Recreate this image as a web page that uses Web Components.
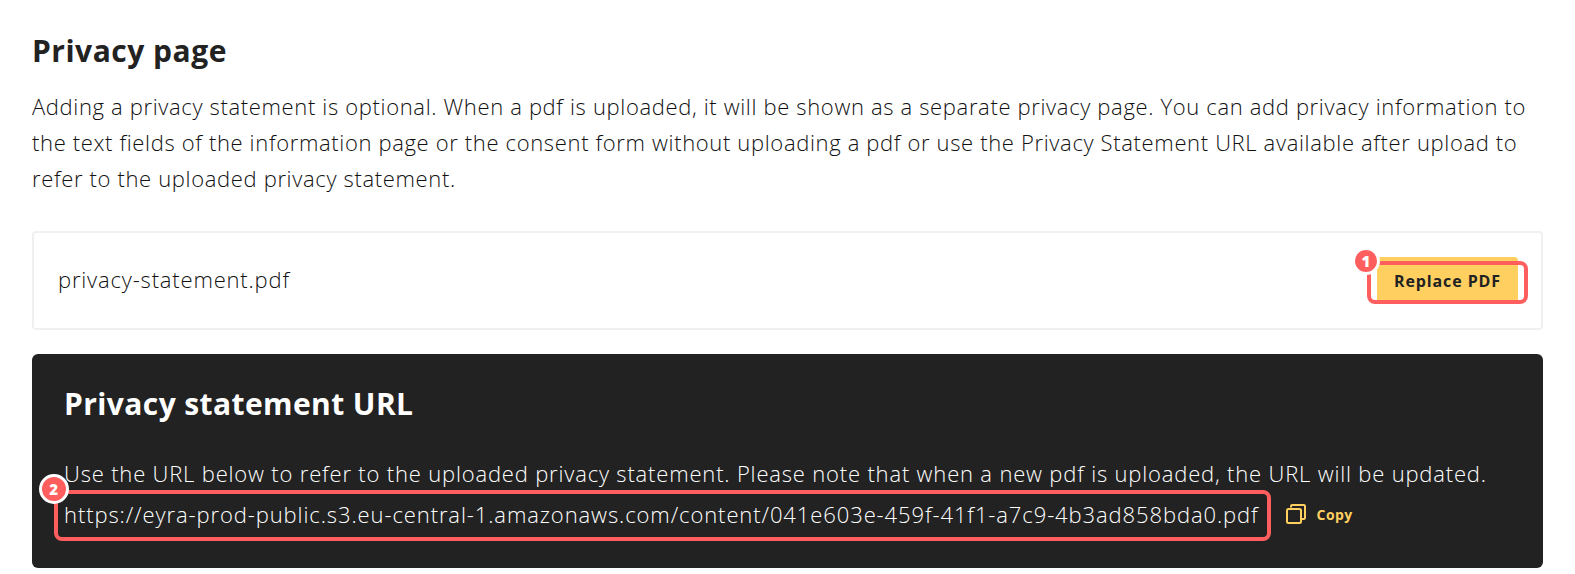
<!DOCTYPE html>
<html>
<head>
<meta charset="utf-8">
<style>
  html, body { margin: 0; background: #fff; }
  body { font-family: "Open Sans", Lato, sans-serif; font-weight: 300; color: #222; overflow: hidden; }
</style>
</head>
<body>
<privacy-page></privacy-page>

<script>
class MarkBadge extends HTMLElement {
    constructor(){
        super();
        this.shadowDOM = this.attachShadow({mode: 'open'});
        this.shadowDOM.innerHTML = `
        <style>
        :host {
            position: absolute;
            width: var(--badge-size, 28px);
            height: var(--badge-size, 28px);
            box-sizing: border-box;
            display: flex;
            align-items: center;
            justify-content: center;
            border: 3px solid #fff;
            border-radius: 50%;
            background: #ff5e5e;
            color: #fff;
            font: 800 15px "Open Sans", sans-serif;
        }
        </style>
        <slot></slot>`;
    }
}

class MarkBox extends HTMLElement {
    constructor(){
        super();
        this.shadowDOM = this.attachShadow({mode: 'open'});
        this.shadowDOM.innerHTML = `
        <style>
        :host {
            position: relative;
            display: inline-block;
        }
        .frame {
            position: absolute;
            inset: var(--frame-inset, -4px);
            border: 4px solid #ff5e5e;
            border-radius: 8px;
            pointer-events: none;
        }
        mark-badge { left: var(--badge-x, -19px); top: var(--badge-y, -16px); }
        </style>
        <slot></slot>
        <div class="frame"></div>
        <mark-badge>${this.getAttribute('n')}</mark-badge>`;
    }
}

class PdfRow extends HTMLElement {
    constructor(){
        super();
        this.shadowDOM = this.attachShadow({mode: 'open'});
        this.shadowDOM.innerHTML = `
        <style>
        :host {
            display: flex;
            align-items: center;
            justify-content: space-between;
            box-sizing: border-box;
            height: 99px;
            margin-top: 35px;
            padding: 0 23px 0 24px;
            border: 2px solid #f0f0f0;
            border-radius: 4px;
        }
        .name { margin-top: -4px; font-size: 22px; color: #111; letter-spacing: .82px; }
        mark-box {
            margin-top: -1px;
            --frame-inset: 4px -10px 0 -10px;
            --badge-x: -25px;
            --badge-y: -10px;
        }
        .btn {
            display: block;
            width: 141px;
            height: 47px;
            text-align: center;
            padding: 2px 0 0;
            border: 0;
            border-radius: 4px;
            background: #ffcf60;
            color: #222;
            font: 700 16px "Open Sans", sans-serif;
            letter-spacing: .9px;
        }
        </style>
        <span class="name"><slot name="file"></slot></span>
        <mark-box n="1"><button class="btn"><slot name="action"></slot></button></mark-box>`;
    }
}

class UrlPanel extends HTMLElement {
    constructor(){
        super();
        this.shadowDOM = this.attachShadow({mode: 'open'});
        this.shadowDOM.innerHTML = `
        <style>
        :host {
            display: block;
            box-sizing: border-box;
            height: 214px;
            margin-top: 24px;
            padding: 30px 32px 0;
            border-radius: 6px;
            background: #222;
            color: #fff;
        }
        h2 { margin: 0; font: 700 30px/40px "Open Sans", sans-serif; letter-spacing: .4px; }
        p { margin: 29px 0 0; font-size: 22px; line-height: 40px; white-space: nowrap; letter-spacing: .82px; }
        .row { display: flex; align-items: center; margin-top: 1px; font-size: 22px; line-height: 40px; letter-spacing: .9px; }
        mark-box {
            --frame-inset: -4px -12px -7px -10px;
            --badge-size: 30px;
            --badge-x: -25px;
            --badge-y: -20px;
            white-space: nowrap;
        }
        .copy {
            display: flex;
            align-items: center;
            gap: 11px;
            margin-left: 27px;
            color: #ffcf60;
            font: 700 14px "Open Sans", sans-serif;
            letter-spacing: .4px;
        }
        svg { width: 20px; height: 20px; fill: none; stroke: #ffcf60; stroke-width: 2; }
        </style>
        <h2><slot name="title"></slot></h2>
        <p><slot name="note"></slot></p>
        <div class="row">
            <mark-box n="2"><slot name="url"></slot></mark-box>
            <span class="copy">
                <svg viewBox="0 0 20 20">
                    <path d="M5 3.5V2.2C5 1.5 5.5 1 6.2 1h11.6C18.5 1 19 1.5 19 2.2v11.6c0 .7-.5 1.2-1.2 1.2H15"/>
                    <rect x="1" y="5" width="14" height="14" rx="1.5"/>
                </svg>
                <slot name="copy"></slot>
            </span>
        </div>`;
    }
}

class PrivacyPage extends HTMLElement {
    constructor(){
        super();
        this.shadowDOM = this.attachShadow({mode: 'open'});
        this.shadowDOM.innerHTML = `
        <style>
        :host {
            display: block;
            box-sizing: border-box;
            width: 1575px;
            height: 574px;
            padding: 31px 32px 0 32px;
        }
        h1 { margin: 0; font: 700 30px/40px "Open Sans", sans-serif; color: #222; letter-spacing: .5px; }
        p { margin: 17px 0 0; font-size: 22px; line-height: 36px; color: #111; letter-spacing: .65px; }
        </style>
        <h1>Privacy page</h1>
        <p>Adding a privacy statement is optional. When a pdf is uploaded, it will be shown as a separate privacy page. You can add privacy information to the text fields of the information page or the consent form without uploading a pdf or use the Privacy Statement URL available after upload to refer to the uploaded privacy statement.</p>
        <pdf-row>
            <span slot="file">privacy-statement.pdf</span>
            <span slot="action">Replace PDF</span>
        </pdf-row>
        <url-panel>
            <span slot="title">Privacy statement URL</span>
            <span slot="note">Use the URL below to refer to the uploaded privacy statement. Please note that when a new pdf is uploaded, the URL will be updated.</span>
            <span slot="url">https://eyra-prod-public.s3.eu-central-1.amazonaws.com/content/041e603e-459f-41f1-a7c9-4b3ad858bda0.pdf</span>
            <span slot="copy">Copy</span>
        </url-panel>`;
    }
}

customElements.define('mark-badge', MarkBadge);
customElements.define('mark-box', MarkBox);
customElements.define('pdf-row', PdfRow);
customElements.define('url-panel', UrlPanel);
customElements.define('privacy-page', PrivacyPage);
</script>
</body>
</html>
